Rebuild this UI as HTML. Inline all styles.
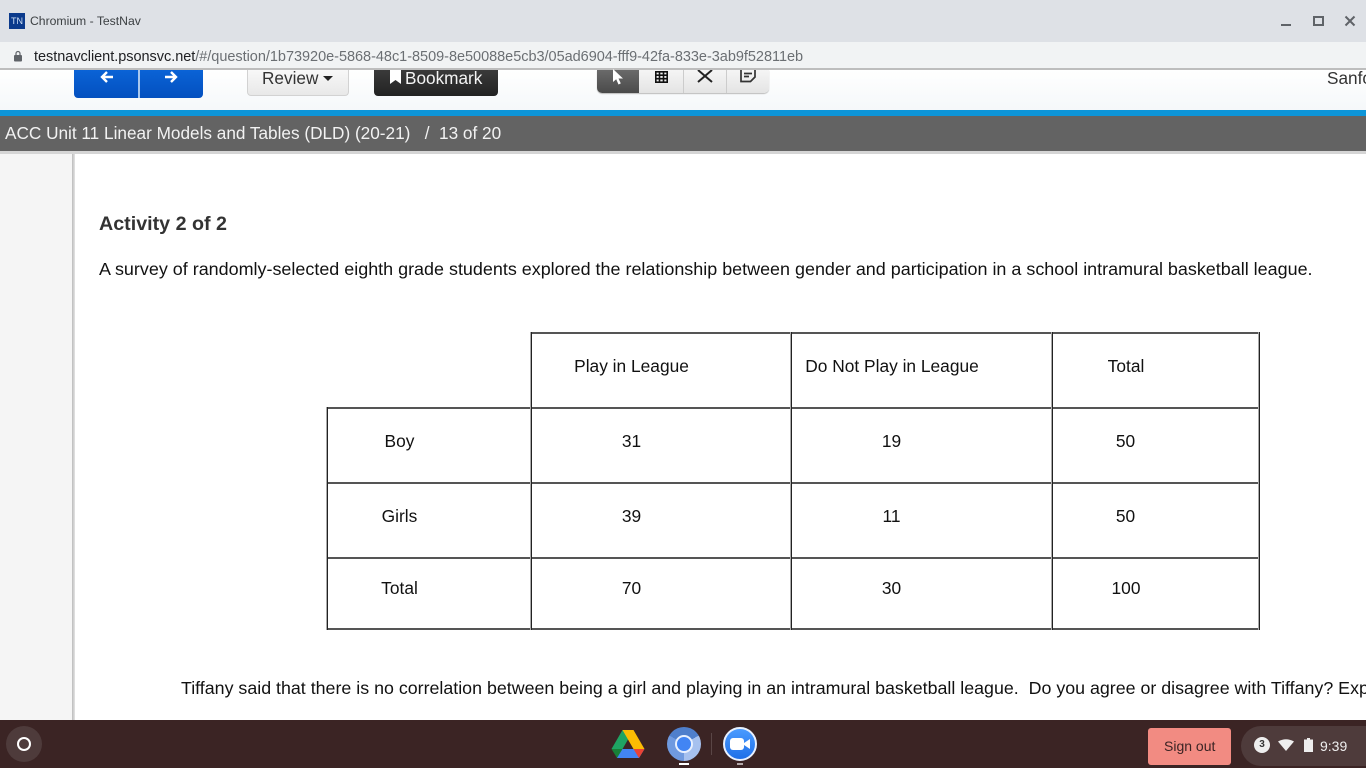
<!DOCTYPE html>
<html lang="en"><head><meta charset="utf-8"><title>Chromium - TestNav</title>
<style>
html,body{margin:0;padding:0;width:1366px;height:768px;overflow:hidden;background:#fff;font-family:"Liberation Sans",sans-serif}
.a{position:absolute;white-space:pre;}
.box{position:absolute;box-sizing:border-box}
.l{position:absolute;background:#555}
.v{position:absolute;width:2px;background:linear-gradient(90deg,#aaa 50%,#222 50%)}
.t{position:absolute;white-space:pre;font-size:17.35px;line-height:20px;color:#111;transform:translateX(-50%)}
</style></head><body>
<!-- title bar -->
<div class="box" style="left:0;top:0;width:1366px;height:42px;background:#dee1e6"></div>
<div class="box" style="left:9px;top:13px;width:16px;height:16px;background:#0b3a8c;color:#cfe0f5;font-size:9px;line-height:16px;text-align:center">TN</div>
<div class="a" style="left:30px;top:14px;font-size:12.2px;line-height:15px;color:#3c4043">Chromium - TestNav</div>
<div class="box" style="left:1281px;top:24px;width:10px;height:2px;background:#5f6368"></div>
<div class="box" style="left:1313px;top:16px;width:11px;height:10px;border:2px solid #5f6368"></div>
<svg class="box" style="left:1344px;top:15px" width="12" height="12" viewBox="0 0 12 12"><path d="M1.500 1.500L10.500 10.500M10.500 1.500L1.500 10.500" stroke="#5f6368" stroke-width="2" fill="none"/></svg>
<!-- url bar -->
<div class="box" style="left:0;top:42px;width:1366px;height:27px;background:#f1f3f4"></div>
<svg class="box" style="left:13px;top:50px" width="10" height="12" viewBox="0 0 10 12"><rect x="1" y="5" width="8" height="6.500" rx="1" fill="#5f6368"/><path d="M3 5V3.500a2 2 0 0 1 4 0V5" stroke="#5f6368" stroke-width="1.200" fill="none"/></svg>
<div class="a" style="left:34px;top:49px;font-size:14.5px;line-height:16px;color:#202124;letter-spacing:-.03px">testnavclient.psonsvc.net<span style="color:#6b6f73">/#/question/1b73920e-5868-48c1-8509-8e50088e5cb3/05ad6904-fff9-42fa-833e-3ab9f52811eb</span></div>
<div class="box" style="left:0;top:68px;width:1366px;height:2px;background:#bdbdbd"></div>
<!-- toolbar -->
<div class="box" style="left:0;top:70px;width:1366px;height:40px;background:linear-gradient(#fff,#f5f8fa)"></div>
<div class="box" style="left:74px;top:70px;width:129px;height:28px;border-radius:0 0 4px 4px;background:linear-gradient(#0a63d6,#0450bf)"></div>
<div class="box" style="left:138px;top:70px;width:2px;height:28px;background:#a9c8ee"></div>
<svg class="box" style="left:99px;top:69px" width="16" height="16" viewBox="0 0 16 16"><path d="M14 8H3M8 3L3 8l5 5" stroke="#fff" stroke-width="2.400" fill="none"/></svg>
<svg class="box" style="left:163px;top:69px" width="16" height="16" viewBox="0 0 16 16"><path d="M2 8h11M8 3l5 5-5 5" stroke="#fff" stroke-width="2.400" fill="none"/></svg>
<div class="box" style="left:247px;top:70px;width:102px;height:26px;border:1px solid #d2d2d2;border-top:0;border-radius:0 0 4px 4px;background:linear-gradient(#f8f8f8,#e8e8e8)"></div>
<div class="a" style="left:262px;top:68px;font-size:17.2px;line-height:20px;color:#333">Review</div>
<div class="box" style="left:323px;top:76px;border:5px solid transparent;border-top-color:#222;border-bottom:0"></div>
<div class="box" style="left:374px;top:70px;width:124px;height:26px;border-radius:0 0 4px 4px;background:linear-gradient(#3a3a3a,#222)"></div>
<svg class="box" style="left:390px;top:70px" width="11" height="14" viewBox="0 0 11 14"><path d="M0 0h11v14L5.500 10 0 14z" fill="#fff"/></svg>
<div class="a" style="left:405px;top:68px;font-size:17.2px;line-height:20px;color:#f4f4f4">Bookmark</div>
<div class="box" style="left:597px;top:70px;width:172px;height:23px;border-radius:0 0 5px 5px;background:linear-gradient(#f5f5f5,#e4e4e4);box-shadow:0 1px 1px #bbb"></div>
<div class="box" style="left:597px;top:70px;width:42px;height:23px;border-radius:0 0 0 5px;background:linear-gradient(#6a6a6a,#4a4a4a)"></div>
<div class="box" style="left:683px;top:70px;width:1px;height:23px;background:#ccc"></div>
<div class="box" style="left:726px;top:70px;width:1px;height:23px;background:#ccc"></div>
<svg class="box" style="left:612px;top:69px" width="13" height="17" viewBox="0 0 13 17"><path d="M1 0V13l3.200-2.800 2.300 5.300 2.300-1.100-2.300-4.900H11z" fill="#fff"/></svg>
<svg class="box" style="left:655px;top:71px" width="13" height="12" viewBox="0 0 13 12"><path d="M.8.800h11.400v10.400H.8zM.8 4.200h11.400M.8 7.700h11.400M4.500.8v10.400M8.500.8v10.400" stroke="#111" stroke-width="1.600" fill="none"/></svg>
<svg class="box" style="left:697px;top:70px" width="16" height="13" viewBox="0 0 16 13"><path d="M1 0L15 12M15 0L1 12" stroke="#222" stroke-width="2" fill="none"/></svg>
<svg class="box" style="left:740px;top:70px" width="16" height="13" viewBox="0 0 16 13"><path d="M1 0v11.500h9.500L15 7V0M4 3.500h8M4 6.500h5" stroke="#333" stroke-width="1.700" fill="none"/></svg>
<div class="a" style="left:1327px;top:68px;font-size:17.2px;line-height:20px;color:#333">Sanfo</div>
<!-- blue and grey bars -->
<div class="box" style="left:0;top:110px;width:1366px;height:6px;background:#0d95d8"></div>
<div class="box" style="left:0;top:116px;width:1366px;height:35px;background:#636363"></div>
<div class="box" style="left:0;top:151px;width:1366px;height:3px;background:#d5d5d5"></div>
<div class="a" style="left:5px;top:123px;font-size:17.2px;line-height:20px;color:#f2f2f2">ACC Unit 11 Linear Models and Tables (DLD) (20-21)   /  13 of 20</div>
<!-- sidebar -->
<div class="box" style="left:0;top:154px;width:72px;height:566px;background:#f5f5f5"></div>
<div class="box" style="left:72px;top:154px;width:3px;height:566px;background:linear-gradient(90deg,#bbb,#e4e4e4)"></div>
<!-- content -->
<div class="a" style="left:99px;top:212px;font-size:19.7px;line-height:24px;font-weight:bold;color:#333">Activity 2 of 2</div>
<div class="a" style="left:99px;top:259px;font-size:17.94px;line-height:20px;color:#111">A survey of randomly-selected eighth grade students explored the relationship between gender and participation in a school intramural basketball league.</div>
<!-- table lines -->
<div class="l" style="left:530px;top:332px;width:730px;height:2px"></div>
<div class="l" style="left:326px;top:407px;width:934px;height:2px"></div>
<div class="l" style="left:326px;top:482px;width:934px;height:2px"></div>
<div class="l" style="left:326px;top:557px;width:934px;height:2px"></div>
<div class="l" style="left:326px;top:628px;width:934px;height:2px"></div>
<div class="v" style="left:326px;top:407px;height:223px"></div>
<div class="v" style="left:530px;top:332px;height:298px"></div>
<div class="v" style="left:790px;top:332px;height:298px"></div>
<div class="v" style="left:1051px;top:332px;height:298px"></div>
<div class="v" style="left:1258px;top:332px;height:298px"></div>
<div class="t" style="left:631.500px;top:356px">Play in League</div>
<div class="t" style="left:892px;top:356px">Do Not Play in League</div>
<div class="t" style="left:1126px;top:356px">Total</div>
<div class="t" style="left:399.500px;top:431px">Boy</div>
<div class="t" style="left:631.500px;top:431px">31</div>
<div class="t" style="left:891.500px;top:431px">19</div>
<div class="t" style="left:1125.500px;top:431px">50</div>
<div class="t" style="left:399.500px;top:506px">Girls</div>
<div class="t" style="left:631.500px;top:506px">39</div>
<div class="t" style="left:891.500px;top:506px">11</div>
<div class="t" style="left:1125.500px;top:506px">50</div>
<div class="t" style="left:399.500px;top:578px">Total</div>
<div class="t" style="left:631.500px;top:578px">70</div>
<div class="t" style="left:891.500px;top:578px">30</div>
<div class="t" style="left:1126px;top:578px">100</div>
<div class="a" style="left:181px;top:678px;font-size:17.82px;line-height:20px;color:#111">Tiffany said that there is no correlation between being a girl and playing in an intramural basketball league.  Do you agree or disagree with Tiffany? Explain.</div>
<!-- shelf -->
<div class="box" style="left:0;top:720px;width:1366px;height:48px;background:#3b2424"></div>
<div class="box" style="left:6px;top:726px;width:36px;height:36px;border-radius:50%;background:#4e3b3b"></div>
<div class="box" style="left:17px;top:737px;width:14px;height:14px;border-radius:50%;border:2px solid #fff"></div>
<svg class="box" style="left:611px;top:729px" width="34" height="30" viewBox="0 0 34 30"><path d="M11.500 1h11l-11 19H0.500z" fill="#1fa463"/><path d="M22.500 1L33.500 20H22.500L11.500 1z" fill="#fbbc04"/><path d="M6.500 20H33.500L28 29H6z" fill="#4285f4"/><path d="M0.500 20L6 29l5.500-9z" fill="#188038"/><path d="M33.500 20L28 29l-5.500-9z" fill="#ea4335"/></svg>
<div class="box" style="left:667px;top:727px;width:34px;height:34px;border-radius:50%;background:conic-gradient(from 60deg,#a6c1ef 0 120deg,#6f9ae0 120deg 240deg,#4f7fcc 240deg 360deg)"></div>
<div class="box" style="left:675px;top:735px;width:18px;height:18px;border-radius:50%;background:#4285f4;border:2px solid #e8f0fe"></div>
<div class="box" style="left:679px;top:763px;width:10px;height:2px;background:#fff"></div>
<div class="box" style="left:711px;top:733px;width:1px;height:22px;background:#5a4646"></div>
<div class="box" style="left:723px;top:727px;width:34px;height:34px;border-radius:50%;background:linear-gradient(#4a9bff,#1f6fe8);border:2px solid #e8f0fe"></div>
<div class="box" style="left:730px;top:738px;width:14px;height:12px;border-radius:3px;background:#fff"></div>
<svg class="box" style="left:744px;top:739px" width="7" height="10" viewBox="0 0 7 10"><path d="M0 4L6 0V10L0 6z" fill="#fff"/></svg>
<div class="box" style="left:737px;top:763px;width:6px;height:2px;background:#b5aaaa"></div>
<div class="box" style="left:1148px;top:728px;width:83px;height:37px;border-radius:3px;background:#f28b82"></div>
<div class="a" style="left:1164px;top:738px;font-size:14px;line-height:16px;color:#3b2424">Sign out</div>
<div class="box" style="left:1241px;top:726px;width:125px;height:40px;border-radius:20px 0 0 20px;background:#4e3b3b"></div>
<div class="box" style="left:1254px;top:737px;width:16px;height:16px;border-radius:50%;background:#eee;color:#333;font-size:10px;line-height:16px;text-align:center;font-weight:bold">3</div>
<svg class="box" style="left:1278px;top:739px" width="16" height="12" viewBox="0 0 16 12"><path d="M0 2.500Q8 -2 16 2.500L8 12z" fill="#eee"/></svg>
<svg class="box" style="left:1304px;top:738px" width="9" height="14" viewBox="0 0 9 14"><path d="M3 0h3v1.500h3V14H0V1.500h3z" fill="#eee"/></svg>
<div class="a" style="left:1320px;top:738px;font-size:14px;line-height:16px;color:#eee">9:39</div>
</body></html>
